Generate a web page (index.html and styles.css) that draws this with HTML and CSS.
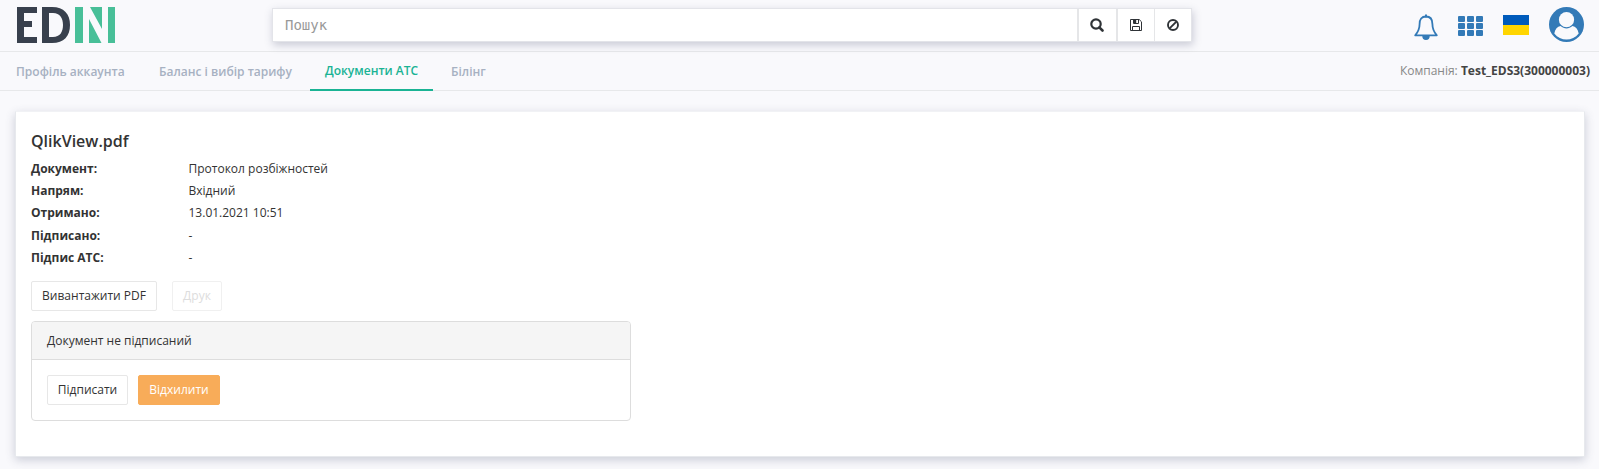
FILE: index.html
```html
<!DOCTYPE html>
<html lang="uk">
<head>
<meta charset="utf-8">
<title>EDIN</title>
<link rel="stylesheet" href="styles.css">
</head>
<body>
<header class="header">
  <svg class="logo" width="100" height="38" viewBox="0 0 100 38" role="img" aria-label="EDIN">
    <path fill="#38404d" d="M0 1h20v6H7v8h8v6H7v10h13v6H0z"/>
    <path fill="#38404d" fill-rule="evenodd" d="M25 1h10c12 0 18 7 18 18s-6 18-18 18H25zM32 7v24h4c7 0 10-5 10-12S43 7 36 7z"/>
    <path fill="#48bf98" d="M58 1h8v36h-8zM73 1h12v22zM72 13l12.500 24H72zM91 1h7v36h-7z"/>
  </svg>
  <form class="search">
    <input class="search-input" type="text" placeholder="Пошук">
    <button class="search-button search-button-find" type="button" aria-label="Шукати">
      <svg width="14" height="14" viewBox="0 0 14 14"><circle cx="6" cy="6" r="4.700" fill="none" stroke="#2f3337" stroke-width="2.200"/><path d="M9.300 9.300l3.200 3.200" stroke="#2f3337" stroke-width="2.600" stroke-linecap="round"/></svg>
    </button>
    <button class="search-button search-button-save" type="button" aria-label="Зберегти">
      <svg width="12" height="12" viewBox="0 0 12 12" fill="none" stroke="#2f3337"><path d="M.5.5h8.700l2.300 2.300v8.700H.5zM2.500 11.500v-4h7v4M3.500.5v4h5v-4"/><path d="M3 0h3.200v4H3z" fill="#2f3337" stroke="none"/></svg>
    </button>
    <button class="search-button search-button-last" type="button" aria-label="Очистити">
      <svg width="12" height="12" viewBox="0 0 12 12" fill="none" stroke="#2f3337" stroke-width="1.900"><circle cx="6" cy="6" r="5"/><path d="M2.600 9.400l6.800-6.800"/></svg>
    </button>
  </form>
  <div class="tools">
    <svg class="bell" width="24" height="26" viewBox="0 0 24 26"><path d="M12 2.500c-4.500 0-6.400 3-6.400 7.500 0 5-1.500 8-4.400 11.300h21.600C19.900 18 18.400 15 18.400 10c0-4.500-1.900-7.500-6.400-7.500z" fill="none" stroke="#337ab7" stroke-width="1.800" stroke-linejoin="round"/><path d="M11 .5h2v3h-2zM8.300 22h7.400a3.700 4 0 0 1-7.400 0z" fill="#337ab7"/></svg>
    <svg class="grid" width="25" height="20" viewBox="0 0 25 20" fill="#337ab7"><rect width="7" height="6" rx="1"/><rect x="9" width="7" height="6" rx="1"/><rect x="18" width="7" height="6" rx="1"/><rect y="7" width="7" height="6" rx="1"/><rect x="9" y="7" width="7" height="6" rx="1"/><rect x="18" y="7" width="7" height="6" rx="1"/><rect y="14" width="7" height="6" rx="1"/><rect x="9" y="14" width="7" height="6" rx="1"/><rect x="18" y="14" width="7" height="6" rx="1"/></svg>
    <svg class="flag" width="26" height="20" viewBox="0 0 26 20"><path fill="#005bbb" d="M0 0h26v10H0z"/><path fill="#ffd500" d="M0 10h26v10H0z"/></svg>
    <svg class="avatar" width="35" height="35" viewBox="0 0 35 35"><circle cx="17.500" cy="17.500" r="17.500" fill="#337ab7"/><circle cx="17.500" cy="12.700" r="7.600" fill="#f9f9fc"/><path d="M5.300 26.500c.8-4.500 3-7 6.300-7.500 3.500 3.200 8.300 3.200 11.800 0 3.300.5 5.500 3 6.300 7.500-6.200 8-18.200 8-24.400 0z" fill="#f9f9fc"/></svg>
  </div>
</header>
<nav class="nav">
  <a class="tab tab-profile">Профіль аккаунта</a>
  <a class="tab tab-balance">Баланс і вибір тарифу</a>
  <a class="tab tab-active">Документи АТС</a>
  <a class="tab tab-billing">Білінг</a>
  <div class="company">Компанія: <b class="company-name">Test_EDS3(300000003)</b></div>
</nav>
<main class="card">
  <h1 class="title">QlikView.pdf</h1>
  <dl class="details">
    <dt>Документ:</dt><dd>Протокол розбіжностей</dd>
    <dt>Напрям:</dt><dd>Вхідний</dd>
    <dt>Отримано:</dt><dd>13.01.2021 10:51</dd>
    <dt>Підписано:</dt><dd>-</dd>
    <dt>Підпис АТС:</dt><dd>-</dd>
  </dl>
  <div class="actions">
    <button class="button button-download">Вивантажити PDF</button>
    <button class="button button-print" disabled>Друк</button>
  </div>
  <section class="panel">
    <div class="panel-heading">Документ не підписаний</div>
    <div class="panel-body">
      <button class="button button-sign">Підписати</button>
      <button class="button button-reject">Відхилити</button>
    </div>
  </section>
</main>
</body>
</html>
```
FILE: styles.css
```css
* { box-sizing: border-box; }
body {
  margin: 0;
  height: 469px;
  overflow: hidden;
  background: #f9f9fc;
  color: #333;
  font: 12px/18px "Open Sans", sans-serif;
}
.header {
  display: flex;
  align-items: flex-start;
  height: 52px;
  border-bottom: 1px solid #e7e8ea;
}
.logo { margin: 6px 0 0 17px; }
.search {
  display: flex;
  width: 920px;
  height: 34px;
  margin: 8px 0 0 155px;
  border: 1px solid #e3e4e9;
  background: #fff;
  box-shadow: 1px 3px 8px rgba(60, 65, 100, .25);
}
.search-input {
  flex: 1;
  min-width: 0;
  padding: 0 12px 1px;
  border: 0;
  background: transparent;
  font: 14px "DejaVu Sans Mono", monospace;
}
.search-input::placeholder { color: #999; }
.search-button {
  display: flex;
  align-items: center;
  justify-content: center;
  width: 39px;
  padding: 0;
  border: 0;
  border-left: 2px solid #e5e6e8;
  background: #fff;
}
.search-button-find { padding-right: 1px; }
.search-button-save { width: 38px; }
.search-button-last { width: 37px; border-left-width: 1px; }
.tools { display: flex; margin-left: auto; padding-right: 15px; }
.bell { margin-top: 14px; }
.grid { margin: 16px 0 0 20px; }
.flag { margin: 15px 0 0 20px; }
.avatar { margin: 7px 0 0 20px; }
.nav {
  display: flex;
  height: 39px;
  border-bottom: 1px solid #e7e8ea;
}
.tab { padding-top: 11px; color: #a7b1c2; font-weight: 600; white-space: nowrap; }
.tab-profile { width: 143px; padding-left: 16px; }
.tab-balance { width: 167px; padding-left: 16px; }
.tab-active {
  width: 123px;
  height: 39px;
  padding: 10px 0 0 15px;
  border-bottom: 2px solid #1ab394;
  color: #1ab394;
}
.tab-billing { padding-left: 18px; }
.company { margin-left: auto; padding: 10px 9px 0 0; color: #888; }
.company-name { color: #444; }
.card {
  height: 346px;
  margin: 20px 14px 0 15px;
  padding: 19px 15px 0;
  border: 1px solid #e7e9ed;
  border-top-color: #f1f2f5;
  background: #fff;
  box-shadow: 0 3px 9px rgba(60, 65, 100, .24);
}
.title { margin: 0; font-size: 16px; font-weight: 600; line-height: 20px; }
.details {
  display: grid;
  grid-template-columns: 157.500px 1fr;
  grid-auto-rows: 22.200px;
  margin: 9px 0 0;
}
.details dt { font-weight: 700; }
.details dd { margin: 0; }
.actions { display: flex; gap: 15px; margin-top: 10.500px; }
.button {
  height: 30px;
  padding: 0 0 1px;
  border: 1px solid #e7e7e7;
  border-radius: 2px;
  background: #fff;
  color: #333;
  font: 12px/18px "Open Sans", sans-serif;
}
.button-download { width: 126px; }
.button-print { width: 50px; border-color: #f0f0f0; color: #ddd; }
.button-sign { width: 81px; }
.button-reject { width: 82px; border-color: #f8ac59; background: #f8ac59; color: #fff; }
.panel {
  width: 600px;
  height: 100px;
  margin-top: 10px;
  border: 1px solid #ddd;
  border-radius: 4px;
  overflow: hidden;
}
.panel-heading {
  height: 38px;
  padding: 10px 15px;
  border-bottom: 1px solid #ddd;
  background: #f5f5f5;
}
.panel-body { display: flex; gap: 10px; padding: 15px; }
```
